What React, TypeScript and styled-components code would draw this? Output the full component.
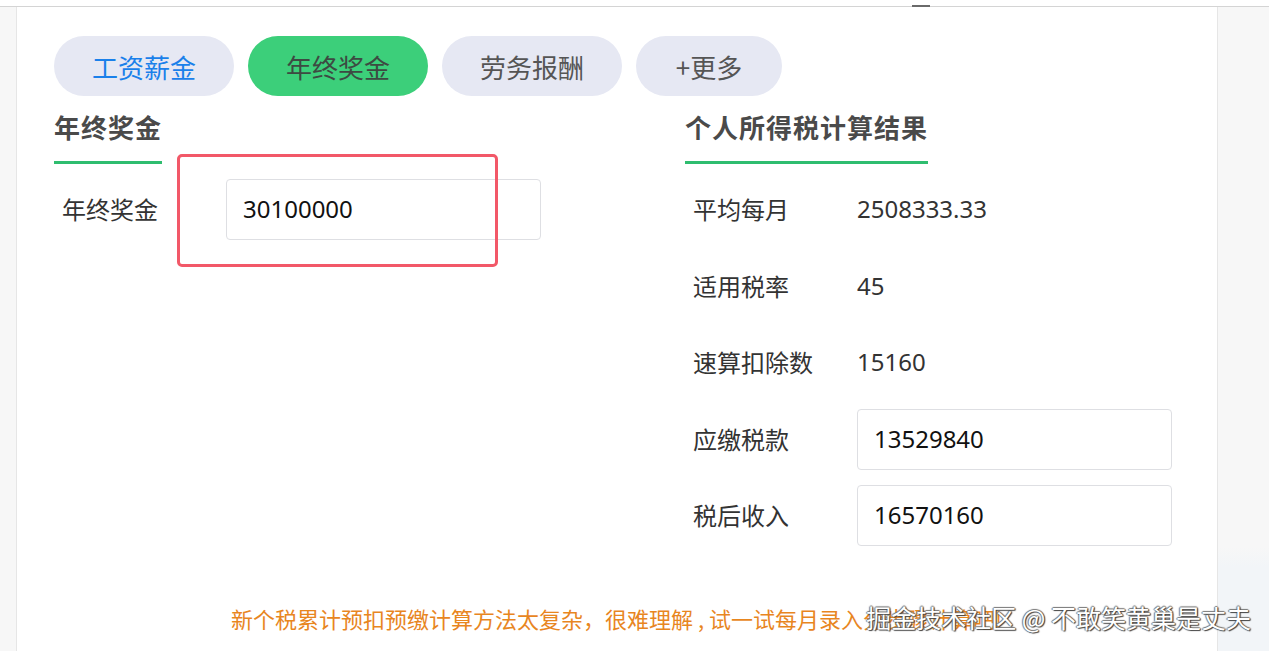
import React from 'react';
import styled, { createGlobalStyle } from 'styled-components';

const GlobalStyle = createGlobalStyle`
  html, body {
    margin: 0;
    padding: 0;
    background: #ffffff;
    font-family: "Noto Sans CJK SC", "Noto Sans", sans-serif;
  }
  * { box-sizing: border-box; }
`;

const tabs = [
  { label: '工资薪金', tone: 'link', width: 180 },
  { label: '年终奖金', tone: 'active', width: 180 },
  { label: '劳务报酬', tone: 'plain', width: 180 },
  { label: '+更多', tone: 'plain', width: 146 },
];

const results = [
  { label: '平均每月', value: '2508333.33' },
  { label: '适用税率', value: '45' },
  { label: '速算扣除数', value: '15160' },
  { label: '应缴税款', value: '13529840', boxed: true },
  { label: '税后收入', value: '16570160', boxed: true },
];

const App = () => {
  return (
    <Page>
      <GlobalStyle />
      <TopBar>
        <TopMark />
      </TopBar>
      <Frame>
        <Card>
          <TabRow>
            {tabs.map((t) => (
              <Tab key={t.label} $tone={t.tone} $width={t.width}>
                {t.label}
              </Tab>
            ))}
          </TabRow>
          <Columns>
            <Column>
              <SectionTitle>年终奖金</SectionTitle>
              <Rows>
                <Row>
                  <Label>年终奖金</Label>
                  <Field readOnly value="30100000" />
                </Row>
              </Rows>
              <Highlight />
            </Column>
            <Column>
              <SectionTitle>个人所得税计算结果</SectionTitle>
              <Rows>
                {results.map((r) => (
                  <Row key={r.label}>
                    <Label>{r.label}</Label>
                    {r.boxed ? (
                      <Field readOnly value={r.value} />
                    ) : (
                      <Value>{r.value}</Value>
                    )}
                  </Row>
                ))}
              </Rows>
            </Column>
          </Columns>
          <Footer>
            新个税累计预扣预缴计算方法太复杂，很难理解 , 试一试每月录入分步骤计算吧!
          </Footer>
        </Card>
        <SideStrip />
      </Frame>
      <Watermark>掘金技术社区 @ 不敢笑黄巢是丈夫</Watermark>
    </Page>
  );
};

export default App;

const Page = styled.div`
  position: relative;
  width: 1269px;
  height: 651px;
  overflow: hidden;
`;

const TopBar = styled.div`
  position: relative;
  height: 7px;
  border-bottom: 1px solid #d4d4d4;
  background: #ffffff;
`;

const TopMark = styled.span`
  position: absolute;
  left: 912px;
  bottom: -1px;
  width: 18px;
  height: 2px;
  background: #6a6a6a;
`;

const Frame = styled.div`
  display: flex;
  height: 644px;
  background: #f7f7f7;
  padding-left: 16px;
`;

const Card = styled.div`
  width: 1202px;
  height: 100%;
  background: #ffffff;
  border-left: 1px solid #e6e6e6;
  border-right: 1px solid #e6e6e6;
  padding: 29px 36px 0 37px;
`;

const SideStrip = styled.div`
  flex: 1;
  background: linear-gradient(#f7f7f7 0, #f7f7f7 540px, #f2f5f8 560px);
`;

const TabRow = styled.div`
  display: flex;
  gap: 14px;
`;

const Tab = styled.div<{ $tone: string; $width: number }>`
  width: ${(p) => p.$width}px;
  height: 60px;
  border-radius: 30px;
  display: flex;
  align-items: center;
  justify-content: center;
  font-size: 26px;
  background: ${(p) => (p.$tone === 'active' ? '#3ccf7a' : '#e6e8f3')};
  color: ${(p) =>
    p.$tone === 'link' ? '#1a80ea' : p.$tone === 'active' ? '#3d4a42' : '#555555'};
`;

const Columns = styled.div`
  display: grid;
  grid-template-columns: 631px 1fr;
  margin-top: 13px;
`;

const Column = styled.div`
  position: relative;
  display: flex;
  flex-direction: column;
  align-items: flex-start;
`;

const SectionTitle = styled.h3`
  margin: 0;
  font-size: 26px;
  font-weight: 700;
  line-height: 36px;
  color: #4a4a4a;
  letter-spacing: 1px;
  padding-bottom: 16px;
  border-bottom: 3px solid #2fbd6f;
`;

const Rows = styled.div`
  display: flex;
  flex-direction: column;
  gap: 15.5px;
  margin-top: 15px;
`;

const Row = styled.div`
  display: flex;
  align-items: center;
  height: 61px;
`;

const Label = styled.span`
  width: 172px;
  padding-left: 8px;
  padding-bottom: 2px;
  font-size: 24px;
  color: #333333;
`;

const Value = styled.span`
  font-family: "Noto Sans", "Noto Sans CJK SC", sans-serif;
  font-size: 24px;
  padding-bottom: 2px;
  color: #333333;
`;

const Field = styled.input`
  width: 315px;
  height: 61px;
  border: 1px solid #dedfe3;
  border-radius: 4px;
  padding: 0 16px 2px;
  font-family: "Noto Sans", "Noto Sans CJK SC", sans-serif;
  font-size: 24px;
  color: #111111;
  background: #ffffff;
  outline: none;
`;

const Highlight = styled.div`
  position: absolute;
  left: 123px;
  top: 45px;
  width: 321px;
  height: 113px;
  border: 3px solid #f25868;
  border-radius: 5px;
  pointer-events: none;
`;

const Footer = styled.div`
  margin-top: 56px;
  padding-left: 177px;
  font-size: 22px;
  color: #e8861f;
  white-space: nowrap;
`;

const Watermark = styled.div`
  position: absolute;
  right: 18px;
  top: 599px;
  font-size: 25px;
  color: #ffffff;
  white-space: nowrap;
  text-shadow: 1px 1px 1px #444, -1px 0 1px #777, 0 -1px 1px #777, 1px 0 1px #555;
`;
